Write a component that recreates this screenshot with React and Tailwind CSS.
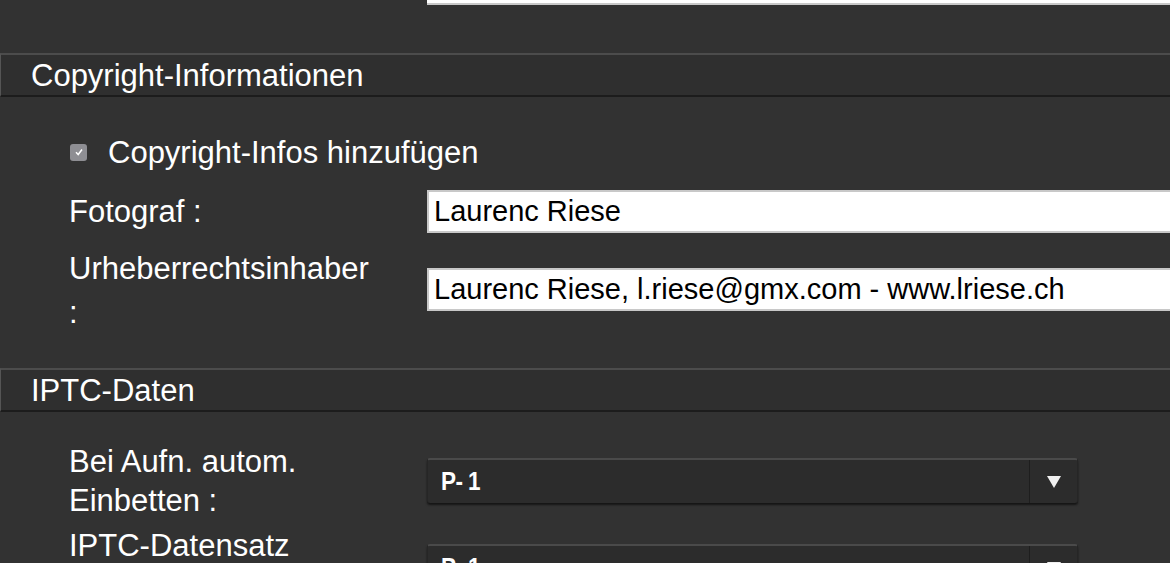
import React from "react";

const font = { fontFamily: '"Liberation Sans", Arial, sans-serif' };

const SectionHeader = ({ title }) => (
  <div className="h-[44px] flex items-center pl-[30px] bg-[#2f2f2f] border-t-2 border-t-[#4c4c4c] border-b-2 border-b-[#1c1c1c] border-l border-l-[#555]">
    <span className="text-[31px] text-white leading-none">{title}</span>
  </div>
);

const TextField = ({ value }) => (
  <div className="h-[43px] bg-white border-2 border-[#c8c8c8] border-r-0 flex items-center pl-[5px] text-[29px] text-black whitespace-nowrap">
    {value}
  </div>
);

const Dropdown = ({ value }) => (
  <div className="w-[651px] h-[45px] flex rounded-[3px] bg-[#2c2c2c] border-t-2 border-t-[#4a4a4a] border-x border-x-[#262626] shadow-[0_2px_2px_#161616]">
    <div className="flex-1 flex items-center pl-[13px]">
      <span className="text-white text-[25px] font-bold tracking-tight scale-x-90 origin-left">{value}</span>
    </div>
    <div className="w-[48px] border-l border-l-[#1e1e1e] flex items-center justify-center">
      <svg width="14" height="12" viewBox="0 0 14 12">
        <path d="M0 0 H14 L7 12 Z" fill="#f0f0f0" />
      </svg>
    </div>
  </div>
);

export default function App() {
  return (
    <div className="w-[1170px] h-[563px] overflow-hidden bg-[#323232] text-white" style={font}>
      {/* Rest der vorherigen Gruppe */}
      <div className="h-[53px] flex">
        <div className="w-[427px] shrink-0" />
        <div className="flex-1 h-[5px] bg-white border-b-2 border-[#c8c8c8]" />
      </div>

      <SectionHeader title="Copyright-Informationen" />

      <div className="pt-[38px] pb-[33px] flex flex-col">
        <label className="flex items-center pl-[70px] h-[34px]">
          <span className="w-[17px] h-[17px] rounded-[3px] bg-[#8e8e93] flex items-center justify-center">
            <svg width="10" height="10" viewBox="0 0 10 10">
              <path d="M2 5.2 L4.2 7.5 L8 2.5" stroke="#fff" strokeWidth="1.5" fill="none" />
            </svg>
          </span>
          <span className="ml-[21px] text-[31px] leading-none">Copyright-Infos hinzufügen</span>
        </label>

        <div className="mt-[21px] flex">
          <div className="w-[427px] shrink-0 pl-[69px] text-[31px] leading-[44px]">Fotograf :</div>
          <div className="flex-1">
            <TextField value="Laurenc Riese" />
          </div>
        </div>

        <div className="mt-[34px] flex">
          <div className="w-[427px] shrink-0 pl-[69px] text-[31px] leading-[44px] -mt-[21px]">
            Urheberrechtsinhaber
            <br />:
          </div>
          <div className="flex-1">
            <TextField value="Laurenc Riese, l.riese@gmx.com - www.lriese.ch" />
          </div>
        </div>
      </div>

      <SectionHeader title="IPTC-Daten" />

      <div className="pt-[30px] flex flex-col">
        <div className="flex">
          <div className="w-[427px] shrink-0 pl-[69px] text-[31px] leading-[39px]">
            Bei Aufn. autom.
            <br />
            Einbetten :
          </div>
          <div className="pt-[16px]">
            <Dropdown value="P- 1" />
          </div>
        </div>
        <div className="flex mt-[6px]">
          <div className="w-[427px] shrink-0 pl-[69px] text-[31px] leading-[39px]">IPTC-Datensatz</div>
          <div className="pt-[18px]">
            <Dropdown value="P- 1" />
          </div>
        </div>
      </div>
    </div>
  );
}
